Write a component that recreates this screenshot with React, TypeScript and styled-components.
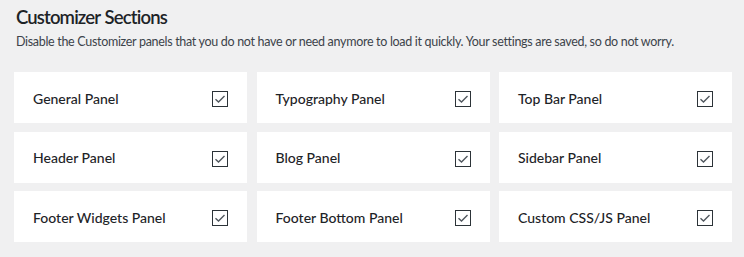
import React from "react";
import styled, { createGlobalStyle } from "styled-components";

const GlobalStyle = createGlobalStyle`
  html, body {
    margin: 0;
    padding: 0;
    background: #f0f0f1;
    font-family: Lato, "Noto Sans", sans-serif;
  }
`;

const Page = styled.div`
  width: 744px;
  height: 257px;
  box-sizing: border-box;
  padding: 4px 12px 0 14px;
  background: #f0f0f1;
`;

const Title = styled.h2`
  margin: 0 0 0 2px;
  font-size: 18.5px;
  line-height: 26px;
  font-weight: 600;
  letter-spacing: -0.85px;
  word-spacing: 1px;
  color: #1d2327;
`;

const Description = styled.p`
  margin: 4px 0 0 2px;
  font-size: 12.5px;
  line-height: 16px;
  letter-spacing: -0.31px;
  color: #3c434a;
  white-space: nowrap;
`;

const Grid = styled.div`
  margin-top: 22px;
  display: grid;
  grid-template-columns: repeat(3, 1fr);
  column-gap: 9.5px;
  row-gap: 8.5px;
`;

const Card = styled.label`
  height: 51px;
  box-sizing: border-box;
  background: #fff;
  display: flex;
  align-items: center;
  justify-content: space-between;
  padding: 1px 19px 0 19px;
`;

const Label = styled.span`
  font-size: 14px;
  font-weight: 500;
  color: #1d2327;
`;

const Box = styled.span`
  width: 16px;
  height: 16px;
  box-sizing: border-box;
  border: 1.5px solid #2c3338;
  display: flex;
  align-items: center;
  justify-content: center;
  margin-top: 2px;
`;

const Check = () => (
  <svg width="12" height="10" viewBox="0 0 12 10" fill="none">
    <path d="M1.5 5.2 L4.5 8 L10.5 2" stroke="#50575e" strokeWidth="1.4" />
  </svg>
);

const panels = [
  "General Panel",
  "Typography Panel",
  "Top Bar Panel",
  "Header Panel",
  "Blog Panel",
  "Sidebar Panel",
  "Footer Widgets Panel",
  "Footer Bottom Panel",
  "Custom CSS/JS Panel",
];

export default function App() {
  return (
    <Page>
      <GlobalStyle />
      <Title>Customizer Sections</Title>
      <Description>
        Disable the Customizer panels that you do not have or need anymore to load it quickly. Your settings are saved, so do not worry.
      </Description>
      <Grid>
        {panels.map((p) => (
          <Card key={p}>
            <Label>{p}</Label>
            <Box>
              <Check />
            </Box>
          </Card>
        ))}
      </Grid>
    </Page>
  );
}
